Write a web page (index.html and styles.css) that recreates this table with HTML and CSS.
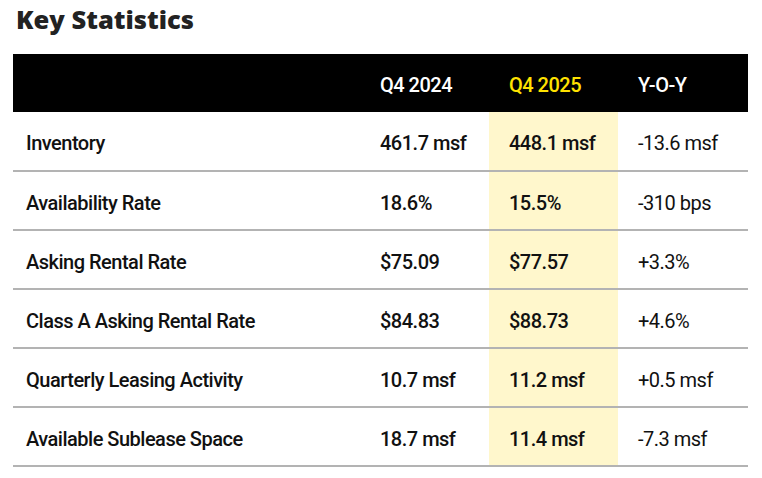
FILE: index.html
```html
<!DOCTYPE html>
<html>
<head>
<meta charset="utf-8">
<link rel="stylesheet" href="styles.css">
</head>
<body>
<h1 class="title">Key Statistics</h1>
<table class="stats">
  <thead>
    <tr>
      <th class="label"></th>
      <th>Q4 2024</th>
      <th class="current">Q4 2025</th>
      <th>Y-O-Y</th>
    </tr>
  </thead>
  <tbody>
    <tr><td class="label">Inventory</td><td>461.7 msf</td><td class="current">448.1 msf</td><td class="change">-13.6 msf</td></tr>
    <tr><td class="label">Availability Rate</td><td>18.6%</td><td class="current">15.5%</td><td class="change">-310 bps</td></tr>
    <tr><td class="label">Asking Rental Rate</td><td>$75.09</td><td class="current">$77.57</td><td class="change">+3.3%</td></tr>
    <tr><td class="label">Class A Asking Rental Rate</td><td>$84.83</td><td class="current">$88.73</td><td class="change">+4.6%</td></tr>
    <tr><td class="label">Quarterly Leasing Activity</td><td>10.7 msf</td><td class="current">11.2 msf</td><td class="change">+0.5 msf</td></tr>
    <tr><td class="label">Available Sublease Space</td><td>18.7 msf</td><td class="current">11.4 msf</td><td class="change">-7.3 msf</td></tr>
  </tbody>
</table>
</body>
</html>
```
FILE: styles.css
```css
html, body {
  margin: 0;
  padding: 0;
  background: #ffffff;
}
body {
  padding: 0 14px 0 13px;
}
.title {
  margin: 0;
  padding: 3px 0 0 3px;
  height: 54px;
  box-sizing: border-box;
  font-family: "Open Sans", sans-serif;
  font-weight: 800;
  font-size: 25.5px;
  line-height: 32px;
  color: #222222;
}
.stats {
  width: 735px;
  border-collapse: collapse;
  table-layout: fixed;
  font-family: Roboto, "Liberation Sans", sans-serif;
  font-weight: 500;
  font-size: 20px;
  color: #111111;
  letter-spacing: -0.5px;
}
.stats th, .stats td {
  box-sizing: border-box;
  text-align: left;
  padding: 4px 0 0 20px;
  white-space: nowrap;
}
.stats th {
  background: #000000;
  color: #ffffff;
  height: 58px;
  font-weight: 500;
}
.stats th.current {
  color: #ffe200;
}
.stats td {
  height: 59px;
  border-bottom: 2px solid #b3b3b3;
}
.stats td.change {
  font-weight: 400;
}
.stats .label {
  width: 347px;
  padding-left: 13px;
}
.stats th:nth-child(2) { width: 129px; }
.stats th:nth-child(3) { width: 129px; }
.stats td.current {
  background: #fff7cc;
}
```
